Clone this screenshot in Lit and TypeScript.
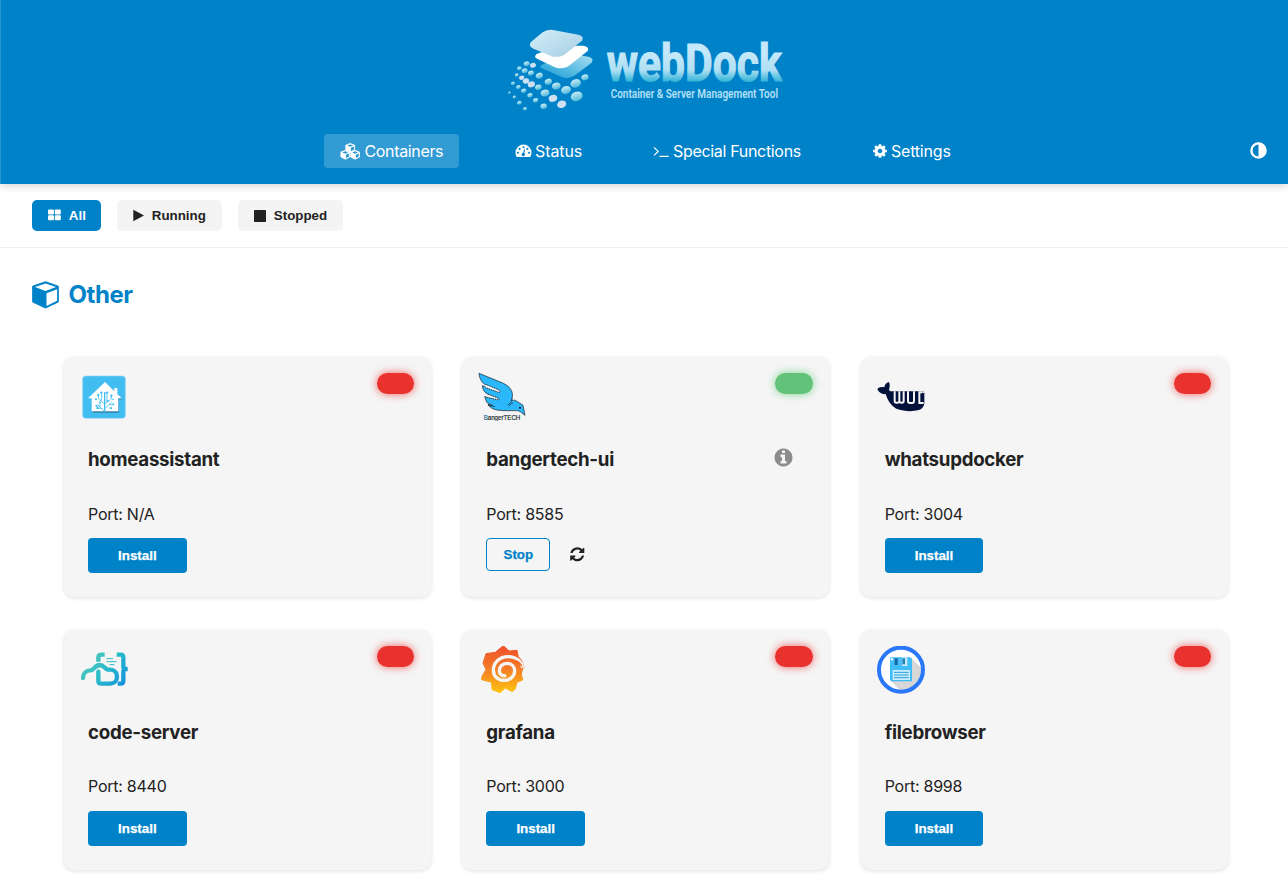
import { LitElement, html, css, svg } from "lit";
import { customElement, property, state } from "lit/decorators.js";

const COG = "M1152 896q0-106-75-181t-181-75-181 75-75 181 75 181 181 75 181-75 75-181zm512-109v222q0 12-8 23t-20 13l-185 28q-19 54-39 91 35 50 107 138 10 12 10 25t-9 23q-27 37-99 108t-94 71q-12 0-26-9l-138-108q-44 23-91 38-16 136-29 186-7 28-36 28h-222q-14 0-24.5-8.5t-11.5-21.5l-28-184q-49-16-90-37l-141 107q-10 9-25 9-14 0-25-11-126-114-165-168-7-10-7-23 0-12 8-23 15-21 51-66.5t54-70.5q-27-50-41-99l-183-27q-13-2-21-12.5t-8-23.5v-222q0-12 8-23t19-13l186-28q14-46 39-92-40-57-107-138-10-12-10-24 0-10 9-23 26-36 98.5-107.5t94.5-71.5q13 0 26 10l138 107q44-23 91-38 16-136 29-186 7-28 36-28h222q14 0 24.5 8.5t11.5 21.5l28 184q49 16 90 37l142-107q9-9 24-9 13 0 25 10 129 119 165 170 7 8 7 22 0 12-8 23-15 21-51 66.5t-54 70.5q26 50 41 98l183 28q13 2 21 12.5t8 23.5z";
const REFRESH = "M1639 1056q0 5-1 7-64 268-268 434.5t-478 166.5q-146 0-282.5-55t-243.5-157l-129 129q-19 19-45 19t-45-19-19-45v-448q0-26 19-45t45-19h448q26 0 45 19t19 45-19 45l-137 137q71 66 161 102t187 36q134 0 250-65t186-179q11-17 53-117 8-23 30-23h192q13 0 22.5 9.5t9.5 22.5zm25-800v448q0 26-19 45t-45 19h-448q-26 0-45-19t-19-45 19-45l138-138q-148-137-349-137-134 0-250 65t-186 179q-11 17-53 117-8 23-30 23h-199q-13 0-22.5-9.5t-9.5-22.5v-7q65-268 270-434.5t480-166.5q146 0 284 55.5t245 156.5l130-129q19-19 45-19t45 19 19 45z";
const INFO = "M1152 1376v-160q0-14-9-23t-23-9h-96v-512q0-14-9-23t-23-9h-320q-14 0-23 9t-9 23v160q0 14 9 23t23 9h96v320h-96q-14 0-23 9t-9 23v160q0 14 9 23t23 9h448q14 0 23-9t9-23zm-128-896v-160q0-14-9-23t-23-9h-192q-14 0-23 9t-9 23v160q0 14 9 23t23 9h192q14 0 23-9t9-23zm640 416q0 209-103 385.5t-279.5 279.5-385.5 103-385.5-103-279.5-279.5-103-385.5 103-385.5 279.5-279.5 385.5-103 385.5 103 279.5 279.5 103 385.5z";

// One hexagonal block of the "cubes" glyph, centred on cx/cy.
const block = (cx: number, cy: number) => svg`
  <path d="M${cx} ${cy - 4.3}l4.4 1.700v4.900l-4.400 2.200-4.400-2.200v-4.900z" fill="#fff" stroke="#fff" stroke-width=".8" stroke-linejoin="round"/>
  <path d="M${cx - 2.9} ${cy - 2.2}l2.900-1.200 2.900 1.200-2.900 1.200z" fill="#2d98d3"/>
  <path d="M${cx + 0.7} ${cy + 3.4}v-3.400l3-1.300v3.200z" fill="#2d98d3"/>`;

const navIcons: Record<string, unknown> = {
  containers: html`<svg width="21" height="18" viewBox="0 0 21 18">${block(10.2, 5.8)}${block(5.3, 12.7)}${block(15.1, 12.7)}</svg>`,
  status: html`<svg width="17" height="16" viewBox="0 0 17 16"><path fill="#fff" d="M8.500 1.600a8 8 0 0 1 8 8c0 1.600-.4 3-1.100 4.100-.2.300-.4.400-.7.400H2.300c-.3 0-.5-.1-.7-.4A7.800 7.800 0 0 1 .5 9.600a8 8 0 0 1 8-8z"/><g fill="#0082c9"><circle cx="2.900" cy="9.800" r="1.050"/><circle cx="4.600" cy="5.900" r="1.050"/><circle cx="8.500" cy="4.200" r="1.050"/><circle cx="12.400" cy="5.900" r="1.050"/><circle cx="14.100" cy="9.800" r="1.050"/><circle cx="8.300" cy="11.500" r="1.700"/></g><path d="M8.400 11.300l1.100-4.500" stroke="#0082c9" stroke-width="1.100" stroke-linecap="round"/></svg>`,
  special: html`<svg width="16" height="16" viewBox="0 0 16 16" fill="none" stroke="#fff" stroke-width="1.200"><path d="M1 4.400l4.200 4-4.200 4M6.500 13.400h9"/></svg>`,
  settings: html`<svg width="16" height="16" viewBox="0 0 1792 1792"><path fill="#fff" d="${COG}"/></svg>`,
};

const logos: Record<string, unknown> = {
  homeassistant: html`<svg viewBox="90 84 144 144">
    <rect x="98" y="93" width="128" height="127" rx="9" fill="#41bdf1" stroke="#8ed6f5" stroke-width="2"/>
    <path d="M168 115l50 48h-11v40h-79v-40z" fill="#3283a8"/>
    <path d="M165 111l28 28v-10h9v18l14 13h-11v39h-80v-39h-11z" fill="#fff"/>
    <g stroke="#41bdf1" stroke-width="2.500" fill="none"><path d="M163 199l-20-20M163 176l-18-16v-9M155 167v-21M166 176l18-14v-10M171 171v-27M166 190l20-20M177 179h12M150 186v-12M146 183h-8M177 189h9M154 190h-14"/></g>
    <path d="M164 199v-58" stroke="#41bdf1" stroke-width="4"/>
    <g fill="#41bdf1"><circle cx="154" cy="143" r="3.500"/><circle cx="145" cy="150" r="3.500"/><circle cx="138" cy="163" r="3"/><circle cx="139" cy="182" r="3"/><circle cx="143" cy="189" r="3.500"/><circle cx="150" cy="172" r="3"/><circle cx="171" cy="143" r="3.500"/><circle cx="184" cy="152" r="3.500"/><circle cx="189" cy="163" r="2.500"/><circle cx="190" cy="178" r="3"/><circle cx="184" cy="190" r="3"/><circle cx="173" cy="168" r="3"/></g></svg>`,
  bangertech: html`<svg viewBox="84 84 144 144">
    <path d="M87 85l66 27c21 8 32 20 34 34 1 9-1 15-3 21 5-1 10-2 12-1l14 9 9 6 6 30-13-10c-4-3-8-4-13-4-18-1-35 2-58-2-13-2-22-8-27-17l14 4-18-10-6-17 43 8-36-17c-10-6-13-14-14-24l50 16-43-20c-11-7-16-20-17-33z" fill="#2bb8fb" stroke="#151b20" stroke-width="2" stroke-linejoin="round"/>
    <path d="M110 119l37 16c5 3 4 8-1 7l-42-15M113 147l30 12c4 2 6 6 3 6l-36-8" fill="#f5f5f5" stroke="#151b20" stroke-width="2.500" stroke-dasharray="4 2"/>
    <path d="M187 160c-2 9-7 18-14 20M176 183c6-5 7-8 13-9M114 181l21 4" fill="none" stroke="#123" stroke-width="2"/>
    <circle cx="210" cy="188" r="3" fill="#101820"/>
    <text x="101" y="224" font-family="Liberation Sans, sans-serif" font-size="21" textLength="110" lengthAdjust="spacingAndGlyphs" fill="#111d25" stroke="#111d25" stroke-width=".5"><tspan fill="#1483bb">B</tspan>anger<tspan>TECH</tspan></text></svg>`,
  wud: html`<svg viewBox="80 84 144 144">
    <path d="M81 133c3-6 12-8 21-6 1-8 5-14 14-16 2 6 3 12 1 19-1 3-1 6 2 9h103v37c-2 10-8 17-20 20-16 4-43 3-59-3-17-6-31-25-37-46-10 2-20-3-25-14z" fill="#02123a"/>
    <path d="M133 139v29q0 5 5 5h4q4 0 5-5 1 5 5 5h3q5 0 5-5v-29M147 139v32M173 139v29q0 6 6 6h6q6 0 6-6v-29M207 139v35h13M208 142h9" fill="none" stroke="#f5f5f5" stroke-width="6"/>
    <path d="M218 139v5h5v-6z" fill="#f5f5f5"/></svg>`,
  codeserver: html`<svg viewBox="29 32 144 144"><defs><linearGradient id="cs" gradientUnits="userSpaceOnUse" x1="60" y1="55" x2="160" y2="140"><stop offset=".1" stop-color="#4bc6bd"/><stop offset=".5" stop-color="#28bbc9"/><stop offset="1" stop-color="#1596dc"/></linearGradient></defs>
    <g fill="none" stroke="url(#cs)" stroke-width="13"><path d="M103 58h-9q-10 0-10 8v13"/><path d="M139 58h12q8 0 8 9v25q0 8 6 9h7-7q-6 1-6 9v26q0 9-9 9h-8"/>
    <path d="M38 128c0-14 10-23 22-23 12 1 11-15 28-16 13 0 15 12 24 14h8c12 0 20 9 20 21 0 13-9 21-21 21H93q-9 0-9-9v-27" stroke-linecap="round" stroke-linejoin="round"/>
    <path d="M108 70h20M108 79h30M118 88h14" stroke-width="3"/></g></svg>`,
  grafana: html`<svg viewBox="26 33 144 144"><defs><linearGradient id="gf" gradientUnits="userSpaceOnUse" x1="0" y1="32" x2="0" y2="174"><stop offset=".1" stop-color="#f0582b"/><stop offset=".5" stop-color="#f57e26"/><stop offset="1" stop-color="#fdc511"/></linearGradient></defs>
    <path d="M102 32l17 16 24-2 4 19c9 8 14 19 17 31l-5 8-3 14 4 17-17 7-5 20-10 8-20-11-16 14-24-9-1-22-30-8 1-10 12-20-9-20 9-28 28-4z" fill="url(#gf)" stroke="url(#gf)" stroke-width="3" stroke-linejoin="round"/>
    <path d="M160 99c-2-18-19-34-43-34-27 0-45 19-45 40 0 20 15 31 33 31 18 0 31-13 31-29 0-13-10-22-23-22-14 0-23 10-23 22 0 12 12 18 20 14" fill="none" stroke="#f5f5f5" stroke-width="10"/>
    <path d="M160 99c-2-16-14-24-25-25l-8 5 4 7c14 0 24 5 29 13z" fill="url(#gf)"/></svg>`,
  filebrowser: html`<svg viewBox="33 32 144 144"><circle cx="105" cy="102" r="66" fill="#fff"/>
    <path d="M135 67l35 35c-1 35-28 68-63 68l-32-32z" fill="#d7d7d7"/><circle cx="105" cy="103" r="66" fill="none" stroke="#2a78fa" stroke-width="12"/>
    <path d="M75 66h58l5 5v67H76l-4-4V69z" fill="#3fbdf8"/><path d="M84 66h40v26H84z" fill="#c7e8f8"/><path d="M84 66h24v26H84z" fill="#49bdf4"/><path d="M86 69h9v20h-9z" fill="#1264a8"/><path d="M109 69h8v18h-8z" fill="#247fb5"/>
    <rect x="80" y="104" width="52" height="30" fill="#c9eefe"/><path d="M84 111h44M84 119h44M84 127h44" stroke="#279bd8" stroke-width="3"/><circle cx="78" cy="72" r="3.500" fill="#fff"/></svg>`,
};

const dots: [number, number, number, number][] = [
  [110,146,9,0],[129,151,9,1],[88,160,7,0],[104,167,9,0],[123,174,9,0],[148,182,11,0],[80,180,6,0],[95,188,8,1],[108,198,10,1],[124,208,11,1],[145,217,10,0],[175,200,11,0],[285,187,11,0],[199,213,13,0],[257,205,16,0],[228,225,15,0],[165,234,13,0],[260,244,18,0],[69,205,6,0],[85,216,7,0],[101,227,8,0],[120,241,8,0],[189,250,13,1],[58,233,4,0],[73,246,5,0],[88,263,7,0],[137,256,8,0],[161,274,10,0],[215,268,14,1],[105,281,6,0],
];

@customElement("app-logo")
class AppLogo extends LitElement {
  static styles = css`:host{display:block;width:310px;height:110px}svg{display:block;overflow:visible}`;
  render() {
    return html`<svg width="310" height="110" viewBox="0 0 930 330"><defs>
      <linearGradient id="t" gradientUnits="userSpaceOnUse" x1="0" y1="80" x2="0" y2="200"><stop offset=".3" stop-color="#c5e8fa"/><stop offset=".72" stop-color="#aedff2"/><stop offset="1" stop-color="#2fb3d8"/></linearGradient>
      <linearGradient id="a" x1="0" y1="0" x2="1" y2="1"><stop stop-color="#d4eefa"/><stop offset="1" stop-color="#a5cee3"/></linearGradient>
      <linearGradient id="b" x1="1" y1="0" x2="0" y2="1"><stop stop-color="#b2e2f2"/><stop offset="1" stop-color="#119bd5"/></linearGradient>
      <linearGradient id="d" x1="0" y1="0" x2="0" y2="1"><stop stop-color="#c9eef5"/><stop offset="1" stop-color="#4fb7da"/></linearGradient></defs>
      <path d="M154 151l70-38 72 12q17 5 9 18l-50 38q-17 12-38 6l-59-26q-12-5-4-10z" fill="url(#b)"/>
      <path d="M140 117l68-25 72 0q19 3 13 16l-53 42q-18 14-42 8l-57-27q-11-5-1-14z" fill="#fff"/>
      <path d="M122 82l36-30q13-10 31-7l76 14q19 4 11 18l-49 39q-15 12-38 9l-59-24q-16-7-8-19z" fill="url(#a)"/>
      ${dots.map(([x, y, r, w]) => svg`<ellipse cx="${x}" cy="${y}" rx="${r}" ry="${r * 0.78}" transform="rotate(-18 ${x} ${y})" fill="${w ? "#cfe0f2" : "url(#d)"}"/>`)}
      <text x="350" y="197" font-family="Roboto, sans-serif" font-weight="700" font-size="157" textLength="525" lengthAdjust="spacingAndGlyphs" fill="url(#t)" stroke="url(#t)" stroke-width="3.500">webDock</text>
      <text x="362" y="248" font-family="Roboto, sans-serif" font-weight="600" font-size="36" textLength="502" lengthAdjust="spacingAndGlyphs" fill="#b4e0f5">Container &amp; Server Management Tool</text>
    </svg>`;
  }
}

interface Container { name: string; port: string; logo: string; running: boolean }

@customElement("container-card")
class ContainerCard extends LitElement {
  @property({ attribute: false }) item!: Container;
  static styles = css`
    :host{display:block}
    .card{position:relative;box-sizing:border-box;height:240px;padding:16px 24px 0;border-radius:10px;background:#f5f5f5;box-shadow:0 1px 4px rgba(0,0,0,.13);color:#222;font-family:Inter,sans-serif}
    .logo{width:48px;height:48px;margin-left:-8px}
    .logo svg{display:block;width:48px;height:48px}
    .pill{position:absolute;top:16px;right:16.700px;width:37.500px;height:21px;border-radius:11px;background:#e9322d;box-shadow:0 0 8px rgba(233,50,45,.75)}
    .pill.on{background:#63c279;box-shadow:0 0 8px rgba(80,200,110,.75)}
    .title{display:flex;justify-content:space-between;align-items:center;height:24px;margin-top:26.900px;padding-right:11px}
    h3{margin:0;font-size:18.700px;line-height:24px;font-weight:700;letter-spacing:-.28px}
    .info{width:21px;height:21px;margin-top:-5px}
    .port{margin-top:29.400px;height:24px;font-size:16px;line-height:24px;letter-spacing:-.25px}
    .actions{display:flex;align-items:flex-start;margin-top:12.700px}
    button{box-sizing:border-box;margin:0;padding:0;border:0;border-radius:4px;font:700 13.330px "Liberation Sans",sans-serif;-webkit-text-stroke:.25px currentColor}
    .install{width:98.700px;height:35px;background:#0082c9;color:#fff}
    .stop{width:64px;height:33px;background:#f5f5f5;color:#0082c9;border:1px solid #0082c9}
    .refresh{width:16.500px;height:16.500px;margin:8px 0 0 18.500px}
  `;
  render() {
    const c = this.item;
    return html`<div class="card">
      <div class="logo">${logos[c.logo]}</div>
      <span class="pill ${c.running ? "on" : ""}"></span>
      <div class="title"><h3>${c.name}</h3>${c.running ? html`<svg class="info" viewBox="0 0 1792 1792"><path fill="#8c8c8c" d="${INFO}"/></svg>` : ""}</div>
      <div class="port">Port: ${c.port}</div>
      <div class="actions">${c.running
        ? html`<button class="stop">Stop</button><svg class="refresh" viewBox="0 0 1792 1792"><path fill="#222" d="${REFRESH}"/></svg>`
        : html`<button class="install">Install</button>`}</div>
    </div>`;
  }
}

@customElement("app-root")
class AppRoot extends LitElement {
  @state() private containers: Container[] = [
    { name: "homeassistant", port: "N/A", logo: "homeassistant", running: false },
    { name: "bangertech-ui", port: "8585", logo: "bangertech", running: true },
    { name: "whatsupdocker", port: "3004", logo: "wud", running: false },
    { name: "code-server", port: "8440", logo: "codeserver", running: false },
    { name: "grafana", port: "3000", logo: "grafana", running: false },
    { name: "filebrowser", port: "8998", logo: "filebrowser", running: false },
  ];
  static styles = css`
    :host{display:block;height:894px;overflow:hidden;background:#fff;font-family:Inter,sans-serif;color:#222}
    svg{display:block;flex:none}
    header{height:184px;box-sizing:border-box;padding-top:15px;background:#0082c9;box-shadow:inset 1px 0 rgba(255,255,255,.15),0 2px 8px rgba(0,0,0,.17)}
    app-logo{margin-left:490px}
    .bar{display:grid;grid-template-columns:324px auto 1fr;align-items:center;height:34px;margin-top:9px}
    nav{grid-column:2;display:flex;gap:40px}
    .tab{display:flex;align-items:center;box-sizing:border-box;height:34px;padding-left:16px;border-radius:4px;color:#fff;font-size:16px;letter-spacing:-.2px;white-space:nowrap}
    .tab.active{background:rgba(255,255,255,.2)}
    .containers{width:135px;gap:3.500px;letter-spacing:-.35px}.status{width:98px;gap:3px;letter-spacing:-.1px}.special{width:180px;gap:4px;letter-spacing:-.32px}.settings{width:110px;gap:3px;padding-left:15px}
    .theme{justify-self:end;margin:-2px 21px 0 0}
    .filters{display:flex;gap:16px;box-sizing:border-box;height:64px;padding:16px 32px;border-bottom:1px solid #f0f0f0}
    .filter{display:flex;align-items:center;gap:7.800px;box-sizing:border-box;width:105px;height:31px;padding:0 0 0 16px;border:0;border-radius:5px;background:#f4f4f4;color:#222;font:700 13.330px "Liberation Sans",sans-serif}
    .filter.on{width:69px;background:#0082c9;color:#fff}
    .heading{display:flex;align-items:center;gap:8.500px;height:32px;margin:31px 0 0 31px;color:#0082c9}
    .heading svg{margin-top:-2px}
    h2{margin:0;font-size:24px;line-height:32px;font-weight:700;letter-spacing:-.45px}
    .grid{display:grid;grid-template-columns:repeat(3,1fr);gap:32.600px 31.300px;margin:46.300px 60.300px 0 64px}
  `;
  render() {
    const tab = (id: string, label: string) => html`<a class="tab ${id} ${id === "containers" ? "active" : ""}">${navIcons[id]}<span>${label}</span></a>`;
    return html`
      <header><app-logo></app-logo>
        <div class="bar"><nav>${tab("containers", "Containers")}${tab("status", "Status")}${tab("special", "Special Functions")}${tab("settings", "Settings")}</nav>
          <svg class="theme" width="17" height="17" viewBox="0 0 17 17"><circle cx="8.500" cy="8.500" r="7.100" fill="none" stroke="#fff" stroke-width="2.400"/><path d="M8.500 1.500a7 7 0 0 1 0 14z" fill="#fff"/></svg>
        </div>
      </header>
      <div class="filters">
        <button class="filter on"><svg width="13" height="13" viewBox="0 0 13 13" fill="#fff"><rect y=".5" width="6" height="5" rx="1"/><rect x="6.800" y=".5" width="6" height="5" rx="1"/><rect y="6.300" width="6" height="5" rx="1"/><rect x="6.800" y="6.300" width="6" height="5" rx="1"/></svg>All</button>
        <button class="filter"><svg width="11" height="13" viewBox="0 0 11 13"><path d="M.3.700l10.700 5.800L.3 12.300z" fill="#222"/></svg>Running</button>
        <button class="filter"><svg width="12" height="12" viewBox="0 0 12 12"><rect width="12" height="12" rx=".8" fill="#222"/></svg>Stopped</button>
      </div>
      <div class="heading"><svg width="29" height="29" viewBox="0 0 29 29"><path d="M14.500 1.700l12.800 4.500v15.800l-12.800 6-12.800-6V6.200z" fill="#0082c9" stroke="#0082c9" stroke-width="1" stroke-linejoin="round"/><path d="M14.500 3.400L25 7.100l-10.500 3.800L4 7.100z M15.500 26V13.200l10.600-4v11.600z" fill="#fff"/></svg><h2>Other</h2></div>
      <main class="grid">${this.containers.map((c) => html`<container-card .item=${c}></container-card>`)}</main>`;
  }
}
